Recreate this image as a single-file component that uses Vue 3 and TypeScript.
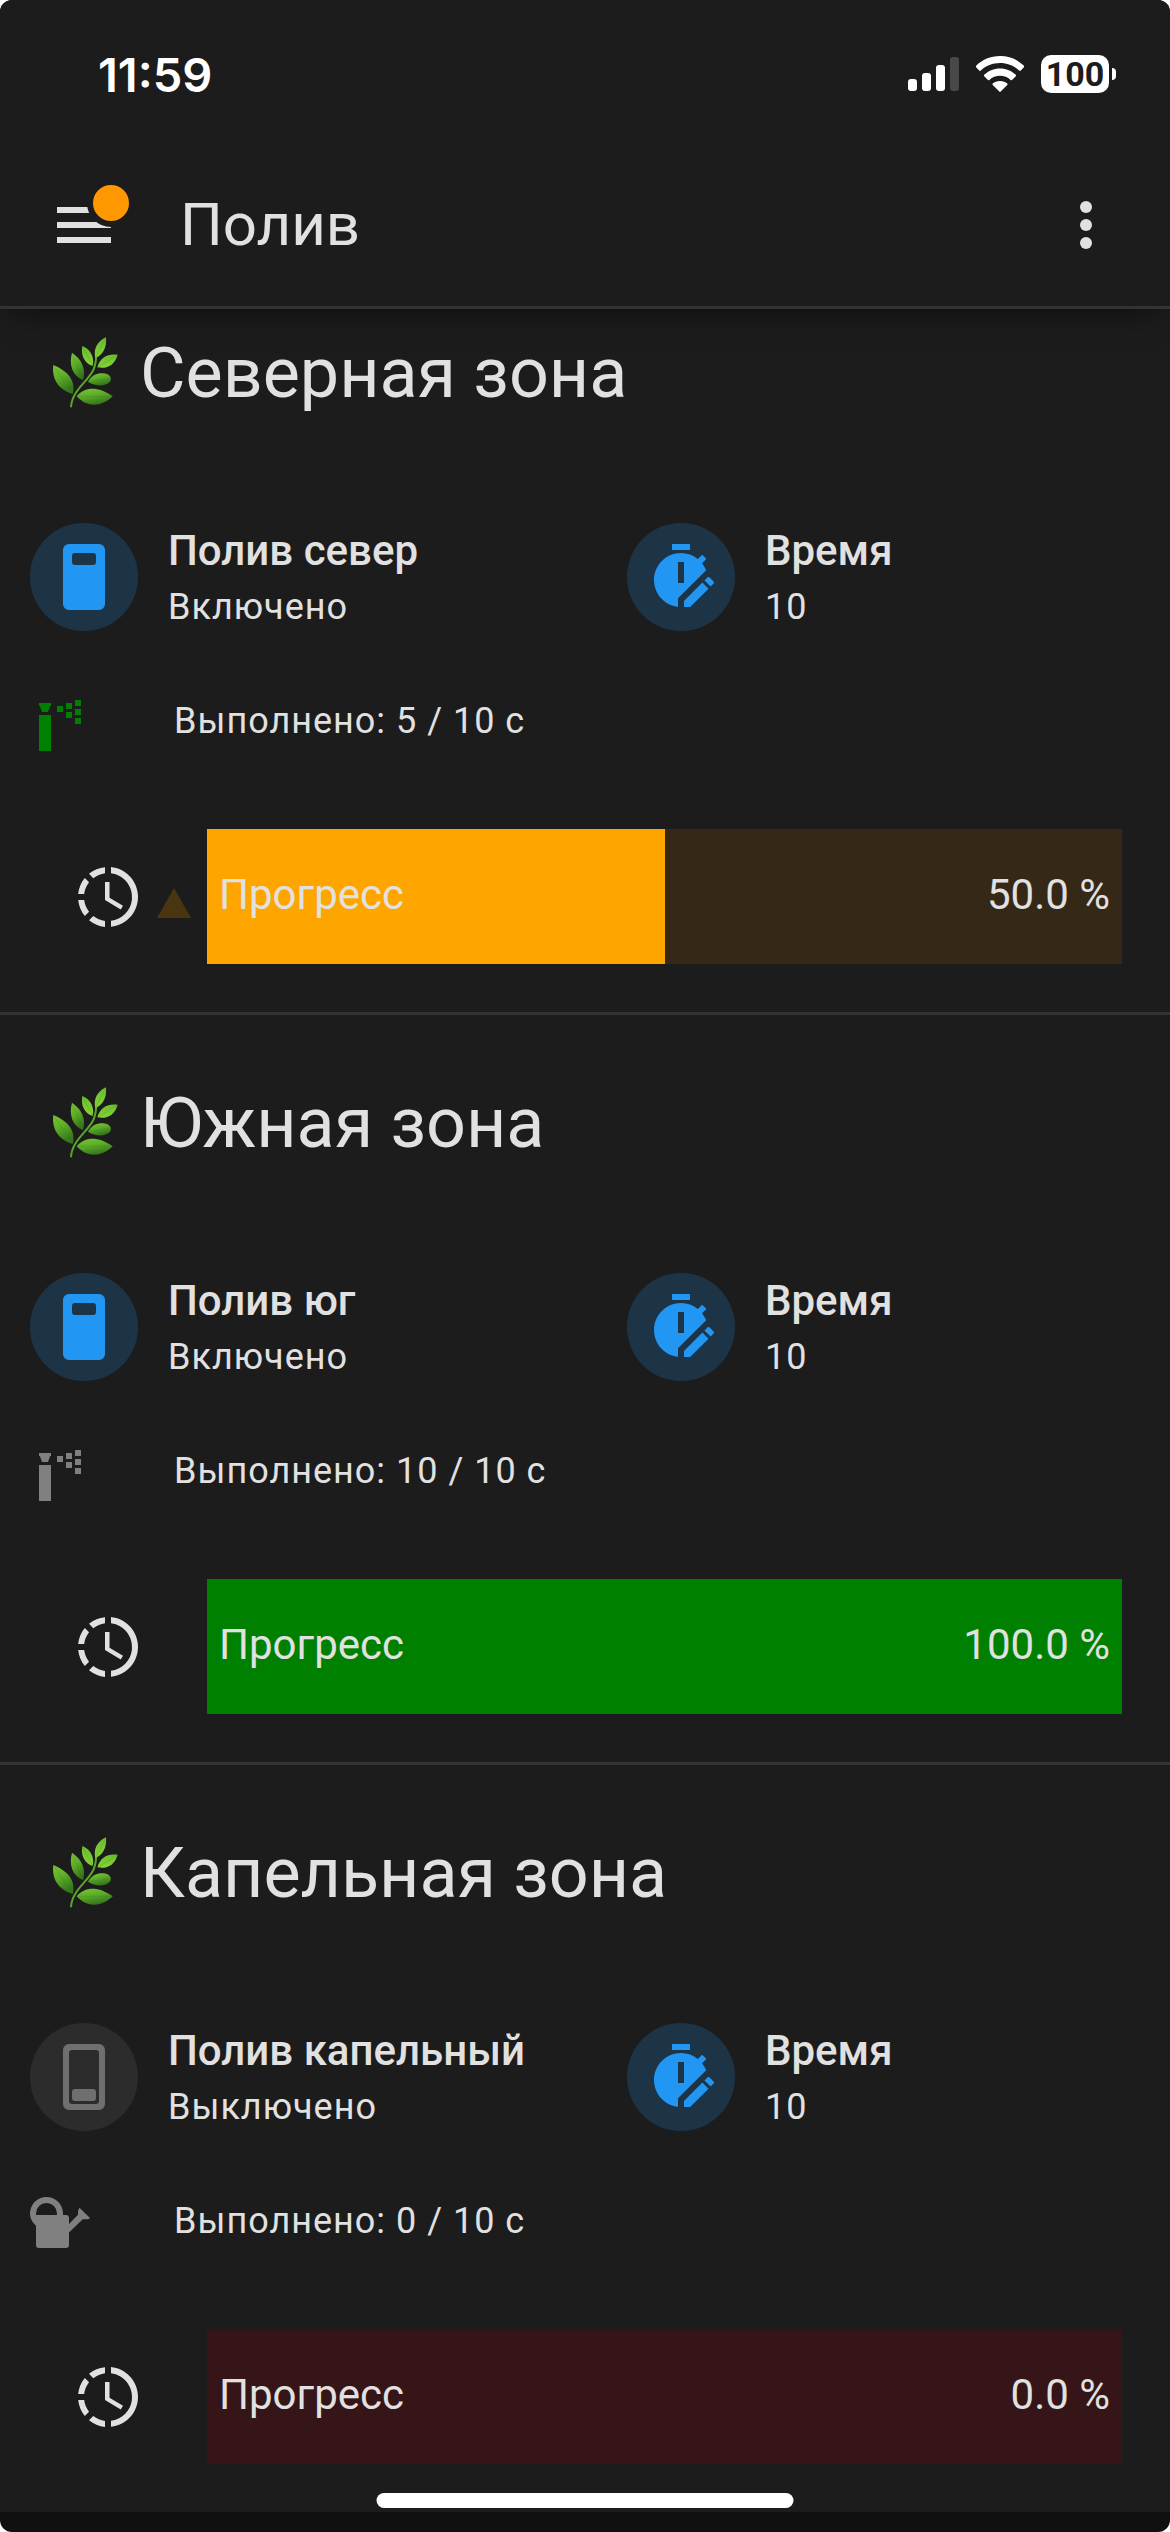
<script setup lang="ts">
interface Zone {
  title: string
  switchName: string
  on: boolean
  icon: 'sprinkler' | 'can'
  active: boolean
  elapsed: number
  duration: number
  tone: 'orange' | 'green' | 'red'
}

const zones: Zone[] = [
  { title: 'Северная зона', switchName: 'Полив север', on: true, icon: 'sprinkler', active: true, elapsed: 5, duration: 10, tone: 'orange' },
  { title: 'Южная зона', switchName: 'Полив юг', on: true, icon: 'sprinkler', active: false, elapsed: 10, duration: 10, tone: 'green' },
  { title: 'Капельная зона', switchName: 'Полив капельный', on: false, icon: 'can', active: false, elapsed: 0, duration: 10, tone: 'red' },
]

const percent = (z: Zone): number => (z.elapsed / z.duration) * 100
</script>

<template>
  <div class="screen">
    <header class="header">
      <div class="status">
        <time class="clock">11:59</time>
        <div class="status-icons">
          <svg class="signal" viewBox="0 0 51 36" aria-hidden="true">
            <rect x="0" y="23" width="9" height="12" rx="3" />
            <rect x="14" y="17" width="9" height="18" rx="3" />
            <rect x="28" y="9" width="9" height="26" rx="3" />
            <rect x="42" y="1" width="9" height="34" rx="3" opacity=".2" />
          </svg>
          <svg class="wifi" viewBox="0 0 48 36" aria-hidden="true">
            <path d="M24 0C33.500 0 41.800 3.600 48 9.800C48.400 10.300 48.300 10.900 47.900 11.300L44.800 14.600C44.300 15.100 43.700 15 43.200 14.600C38 9.700 31.400 7 24 7S10 9.700 4.800 14.600C4.300 15 3.700 15.100 3.200 14.600L.100 11.300C-.300 10.900-.300 10.300.100 9.800C6.200 3.600 14.500 0 24 0Z" />
            <path d="M24 12.500C30.200 12.500 35.700 14.900 39.800 18.800C40.200 19.300 40.200 19.900 39.800 20.300L36 24C35.500 24.400 35 24.300 34.600 23.900C31.700 21.300 28 19.800 24 19.800S16.300 21.300 13.400 23.900C13 24.300 12.500 24.400 12 24L8.200 20.300C7.800 19.900 7.800 19.300 8.200 18.800C12.300 14.900 17.800 12.500 24 12.500Z" />
            <path d="M24 25C27 25 29.500 26 31.300 27.600C31.700 28 31.700 28.500 31.300 28.900L24.700 35.500C24.200 36 23.800 36 23.300 35.500L16.700 28.900C16.300 28.500 16.300 28 16.700 27.600C18.500 26 21 25 24 25Z" />
          </svg>
          <div class="battery"><span class="battery-level">100</span></div>
        </div>
      </div>
      <div class="toolbar">
        <button class="icon-button" type="button" aria-label="Меню">
          <svg class="icon" viewBox="0 0 24 24"><path d="M3 6H21V8H3V6M3 11H21V13H3V11M3 16H21V18H3V16Z" /></svg>
          <span class="badge"></span>
        </button>
        <h1 class="page-title">Полив</h1>
        <button class="icon-button" type="button" aria-label="Ещё">
          <svg class="icon" viewBox="0 0 24 24">
            <circle cx="12" cy="6" r="2" /><circle cx="12" cy="12" r="2" /><circle cx="12" cy="18" r="2" />
          </svg>
        </button>
      </div>
    </header>

    <main class="zones">
      <section v-for="(zone, i) in zones" :key="zone.title" class="zone">
        <h2 class="zone-title">
          <svg class="herb" viewBox="144 1009 216 216" aria-hidden="true">
            <defs>
              <linearGradient :id="'leaf' + i" x1="0" y1="0" x2=".4" y2="1">
                <stop offset="0" stop-color="#7cc832" />
                <stop offset=".5" stop-color="#5cac28" />
                <stop offset="1" stop-color="#36761c" />
              </linearGradient>
              <linearGradient :id="'tip' + i" x1="0" y1="0" x2="0" y2="1">
                <stop offset="0" stop-color="#6bc02a" />
                <stop offset="1" stop-color="#86d23c" />
              </linearGradient>
            </defs>
            <path d="M213 1220C215 1170 262 1145 280 1108C287 1092 289 1080 288 1062" fill="none" stroke="#5ba42b" stroke-width="6" />
            <g :fill="`url(#tip${i})`">
              <path d="M318 1010C290 1024 280 1045 286 1072C308 1064 321 1042 318 1010Z" />
              <path d="M353 1062C322 1058 300 1070 292 1100C320 1106 344 1094 353 1062Z" />
              <path d="M247 1036C242 1064 252 1087 278 1096C284 1070 272 1046 247 1036Z" />
            </g>
            <g :fill="`url(#leaf${i})`">
              <path d="M216 1056C206 1092 217 1126 249 1138C259 1106 246 1076 216 1056Z" />
              <path d="M264 1143C278 1119 298 1115 318 1119C333 1123 335 1135 330 1143C315 1158 288 1158 264 1143Z" />
              <path d="M160 1093C155 1132 172 1166 218 1180C228 1142 206 1112 160 1093Z" />
              <path d="M230 1187C254 1158 294 1156 338 1187C304 1220 262 1222 230 1187Z" />
            </g>
            <g fill="none" stroke="#397b1c" stroke-width="1.500" opacity=".5">
              <path d="M316 1014L287 1070M350 1064L294 1100M249 1040L277 1094M218 1062L248 1134M328 1134L268 1143M163 1098L216 1178M334 1187L234 1187" />
            </g>
          </svg>
          <span>{{ zone.title }}</span>
        </h2>

        <div class="tiles">
          <div class="tile">
            <button class="round" :class="{ off: !zone.on }" type="button" :aria-label="zone.switchName" :aria-pressed="zone.on">
              <svg class="icon" viewBox="0 0 24 24">
                <path v-if="zone.on" fill-rule="evenodd" d="M7 1H17A2 2 0 0 1 19 3V21A2 2 0 0 1 17 23H7A2 2 0 0 1 5 21V3A2 2 0 0 1 7 1ZM9 4A1 1 0 0 0 8 5V7A1 1 0 0 0 9 8H15A1 1 0 0 0 16 7V5A1 1 0 0 0 15 4Z" />
                <path v-else fill-rule="evenodd" d="M7 1H17A2 2 0 0 1 19 3V21A2 2 0 0 1 17 23H7A2 2 0 0 1 5 21V3A2 2 0 0 1 7 1ZM8 3A1 1 0 0 0 7 4V20A1 1 0 0 0 8 21H16A1 1 0 0 0 17 20V4A1 1 0 0 0 16 3ZM9 16H15A1 1 0 0 1 16 17V19A1 1 0 0 1 15 20H9A1 1 0 0 1 8 19V17A1 1 0 0 1 9 16Z" />
              </svg>
            </button>
            <div class="tile-text">
              <span class="primary">{{ zone.switchName }}</span>
              <span class="secondary">{{ zone.on ? 'Включено' : 'Выключено' }}</span>
            </div>
          </div>
          <div class="tile">
            <button class="round" type="button" aria-label="Время">
              <svg class="icon" viewBox="0 0 24 24">
                <path fill-rule="evenodd" d="M9 1H15V3H9ZM11 21.940C6.500 21.440 3 17.630 3 13C3 8.030 7.030 4 12 4C14.120 4 16.070 4.740 17.620 6L19.040 4.560C19.550 5 20 5.460 20.450 5.970L19.030 7.390C19.600 8.100 20.050 8.900 20.400 9.760L11 19.120ZM11 7V14H13V7Z" />
                <path d="M13 19.960V22H15.040L21.170 15.880L19.130 13.830L13 19.960M22.850 13.470L21.530 12.150C21.330 11.950 21 11.950 20.810 12.150L19.830 13.130L21.870 15.170L22.850 14.190C23.050 14 23.050 13.670 22.850 13.470Z" />
              </svg>
            </button>
            <div class="tile-text">
              <span class="primary">Время</span>
              <span class="secondary">{{ zone.duration }}</span>
            </div>
          </div>
        </div>

        <div class="state">
          <svg class="icon" :class="{ active: zone.active }" viewBox="0 0 24 24" aria-hidden="true">
            <path v-if="zone.icon === 'sprinkler'" d="M5 6H9V7H8.700L8 9H6L5.300 7H5ZM5 10H9V22H5ZM11 7H13V9H11ZM14 6H16V8H14ZM14 9H16V11H14ZM17 5H19V7H17ZM17 8H19V10H17ZM17 11H19V13H17Z" />
            <path v-else fill-rule="evenodd" d="M4 13.500C2.800 12.600 2 11 2 9.500A5.500 5.500 0 0 1 13 9.500V10H14A1 1 0 0 1 15 11V13L18 9.900L18 8.600L18.500 7.600L22 11L21.400 11.400H19.600L15 15.800V20A1 1 0 0 1 14 21H5A1 1 0 0 1 4 20ZM4 10H11V9.500A3.500 3.500 0 0 0 4 9.500Z" />
          </svg>
          <span class="secondary">Выполнено: {{ zone.elapsed }} / {{ zone.duration }} с</span>
        </div>

        <div class="progress-row">
          <svg class="icon" viewBox="0 0 24 24" aria-hidden="true">
            <path d="M13 2.030V4.050C17.390 4.590 20.500 8.580 19.960 12.970C19.500 16.610 16.640 19.500 13 19.930V21.930C18.500 21.380 22.500 16.500 21.950 11C21.500 6.250 17.730 2.500 13 2.030M11 2.060C9.050 2.250 7.190 3 5.670 4.260L7.100 5.740C8.220 4.840 9.570 4.260 11 4.060V2.060M4.260 5.670C3 7.190 2.250 9.040 2.050 11H4.050C4.240 9.580 4.800 8.230 5.690 7.100L4.260 5.670M2.060 13C2.260 14.960 3.030 16.810 4.270 18.330L5.690 16.900C4.810 15.770 4.240 14.420 4.060 13H2.060M7.100 18.370L5.670 19.740C7.180 21 9.040 21.790 11 22V20C9.580 19.820 8.230 19.250 7.100 18.370M12.500 7V12.250L17 14.920L16.250 16.150L11 13V7H12.500Z" />
          </svg>
          <div class="trend">
            <svg v-if="zone.tone === 'orange'" class="triangle" viewBox="0 0 34 44" aria-hidden="true"><path d="M17 13L34 43H0Z" /></svg>
          </div>
          <div class="bar" :class="zone.tone" role="progressbar" aria-label="Прогресс" :aria-valuenow="percent(zone)">
            <div class="fill" :style="{ width: percent(zone) + '%' }"></div>
            <span class="bar-label">Прогресс</span>
            <span class="bar-label">{{ percent(zone).toFixed(1) }} %</span>
          </div>
        </div>
      </section>
    </main>
    <div class="home-indicator"></div>
  </div>
</template>

<style>
body {
  margin: 0;
  background: #fff;
}
</style>

<style scoped>
.screen {
  min-height: 100vh;
  overflow: hidden;
  border-radius: 12px;
  background: #101010;
  color: #e1e1e1;
  font-family: Roboto, "Noto Sans", sans-serif;
}

.header {
  position: relative;
  z-index: 1;
  border-bottom: 3px solid #333;
  background: #1c1c1c;
  box-shadow: 0 12px 30px -12px rgba(0, 0, 0, 0.6);
}

.status {
  display: flex;
  align-items: center;
  justify-content: space-between;
  height: 141px;
  padding: 0 54px 0 98px;
  color: #fff;
  box-sizing: border-box;
}

.clock {
  padding-top: 8px;
  font: 600 47px/56px Inter, sans-serif;
}

.status-icons {
  display: flex;
  align-items: center;
  padding-top: 6px;
}

.signal {
  width: 51px;
  height: 36px;
  fill: #fff;
}

.wifi {
  width: 48px;
  height: 36px;
  margin: 0 17px;
  fill: #fff;
}

.battery {
  display: flex;
  align-items: center;
}

.battery::after {
  width: 4px;
  height: 12px;
  margin-left: 3px;
  border-radius: 0 6px 6px 0;
  background: #fff;
  content: "";
}

.battery-level {
  width: 68px;
  border-radius: 10px;
  background: #fff;
  color: #1c1c1c;
  font-size: 34px;
  font-weight: 700;
  line-height: 38px;
  text-align: center;
}

.toolbar {
  display: flex;
  align-items: center;
  height: 165px;
  padding: 3px 48px 0;
  box-sizing: border-box;
}

.icon-button {
  position: relative;
  display: flex;
  padding: 0;
  border: 0;
  background: none;
  color: inherit;
}

.icon {
  flex: none;
  width: 72px;
  height: 72px;
  fill: currentColor;
}

.badge {
  position: absolute;
  top: -10px;
  right: -15px;
  width: 36px;
  height: 36px;
  border: 6px solid #1c1c1c;
  border-radius: 50%;
  background: #ff9800;
}

.page-title {
  flex: 1;
  margin: 0;
  padding-left: 60px;
  font-size: 60px;
  font-weight: 400;
  line-height: 72px;
}

/* The list is scrolled so that its top edge sits under the header. */
.zones {
  margin-top: -44px;
}

.zone {
  padding-bottom: 48px;
  border-bottom: 3px solid #333;
  background: #1c1c1c;
}

.zone:last-child {
  border-bottom: 0;
}

.zone-title {
  display: flex;
  align-items: center;
  gap: 20px;
  margin: 0;
  padding: 36px 48px 48px;
  font-size: 70px;
  font-weight: 400;
  line-height: 144px;
}

.herb {
  flex: none;
  width: 72px;
  height: 72px;
}

.tiles {
  display: grid;
  grid-template-columns: 1fr 1fr;
  gap: 84px;
  padding: 30px 30px 0;
}

.tile {
  display: flex;
  align-items: center;
  gap: 30px;
}

.round {
  display: flex;
  flex: none;
  align-items: center;
  justify-content: center;
  width: 108px;
  height: 108px;
  padding: 0;
  border: 0;
  border-radius: 50%;
  background: #1d3447;
  color: #2196f3;
}

.round.off {
  background: #2c2c2c;
  color: #6f6f6f;
}

.tile-text {
  display: flex;
  flex-direction: column;
  gap: 4px;
  white-space: nowrap;
}

.primary {
  font-size: 42px;
  font-weight: 500;
  line-height: 56px;
}

.secondary {
  font-size: 36px;
  line-height: 48px;
  letter-spacing: 1px;
}

.state {
  display: flex;
  align-items: center;
  gap: 78px;
  padding: 54px 24px 0;
}

.state .icon {
  color: #808080;
}

.state .icon.active {
  color: #008000;
}

.progress-row {
  display: flex;
  align-items: center;
  padding: 72px 48px 0 72px;
}

.trend {
  display: flex;
  flex: none;
  width: 50px;
  padding-left: 13px;
}

.triangle {
  width: 34px;
  height: 44px;
  fill: #493611;
}

.bar {
  position: relative;
  display: flex;
  flex: 1;
  align-items: center;
  justify-content: space-between;
  height: 135px;
  padding: 0 12px 4px;
  box-sizing: border-box;
}

.fill {
  position: absolute;
  inset: 0 auto 0 0;
}

.bar-label {
  position: relative;
  font-size: 42px;
  line-height: 48px;
}

.orange {
  background: #352817;
}

.orange .fill {
  background: #ffa500;
}

.green {
  background: #182c18;
}

.green .fill {
  background: #008000;
}

.red {
  background: #351517;
}

.red .fill {
  background: #f00;
}

.home-indicator {
  position: fixed;
  bottom: 24px;
  left: 50%;
  z-index: 2;
  width: 417px;
  height: 15px;
  border-radius: 8px;
  background: #fff;
  transform: translateX(-50%);
}
</style>
